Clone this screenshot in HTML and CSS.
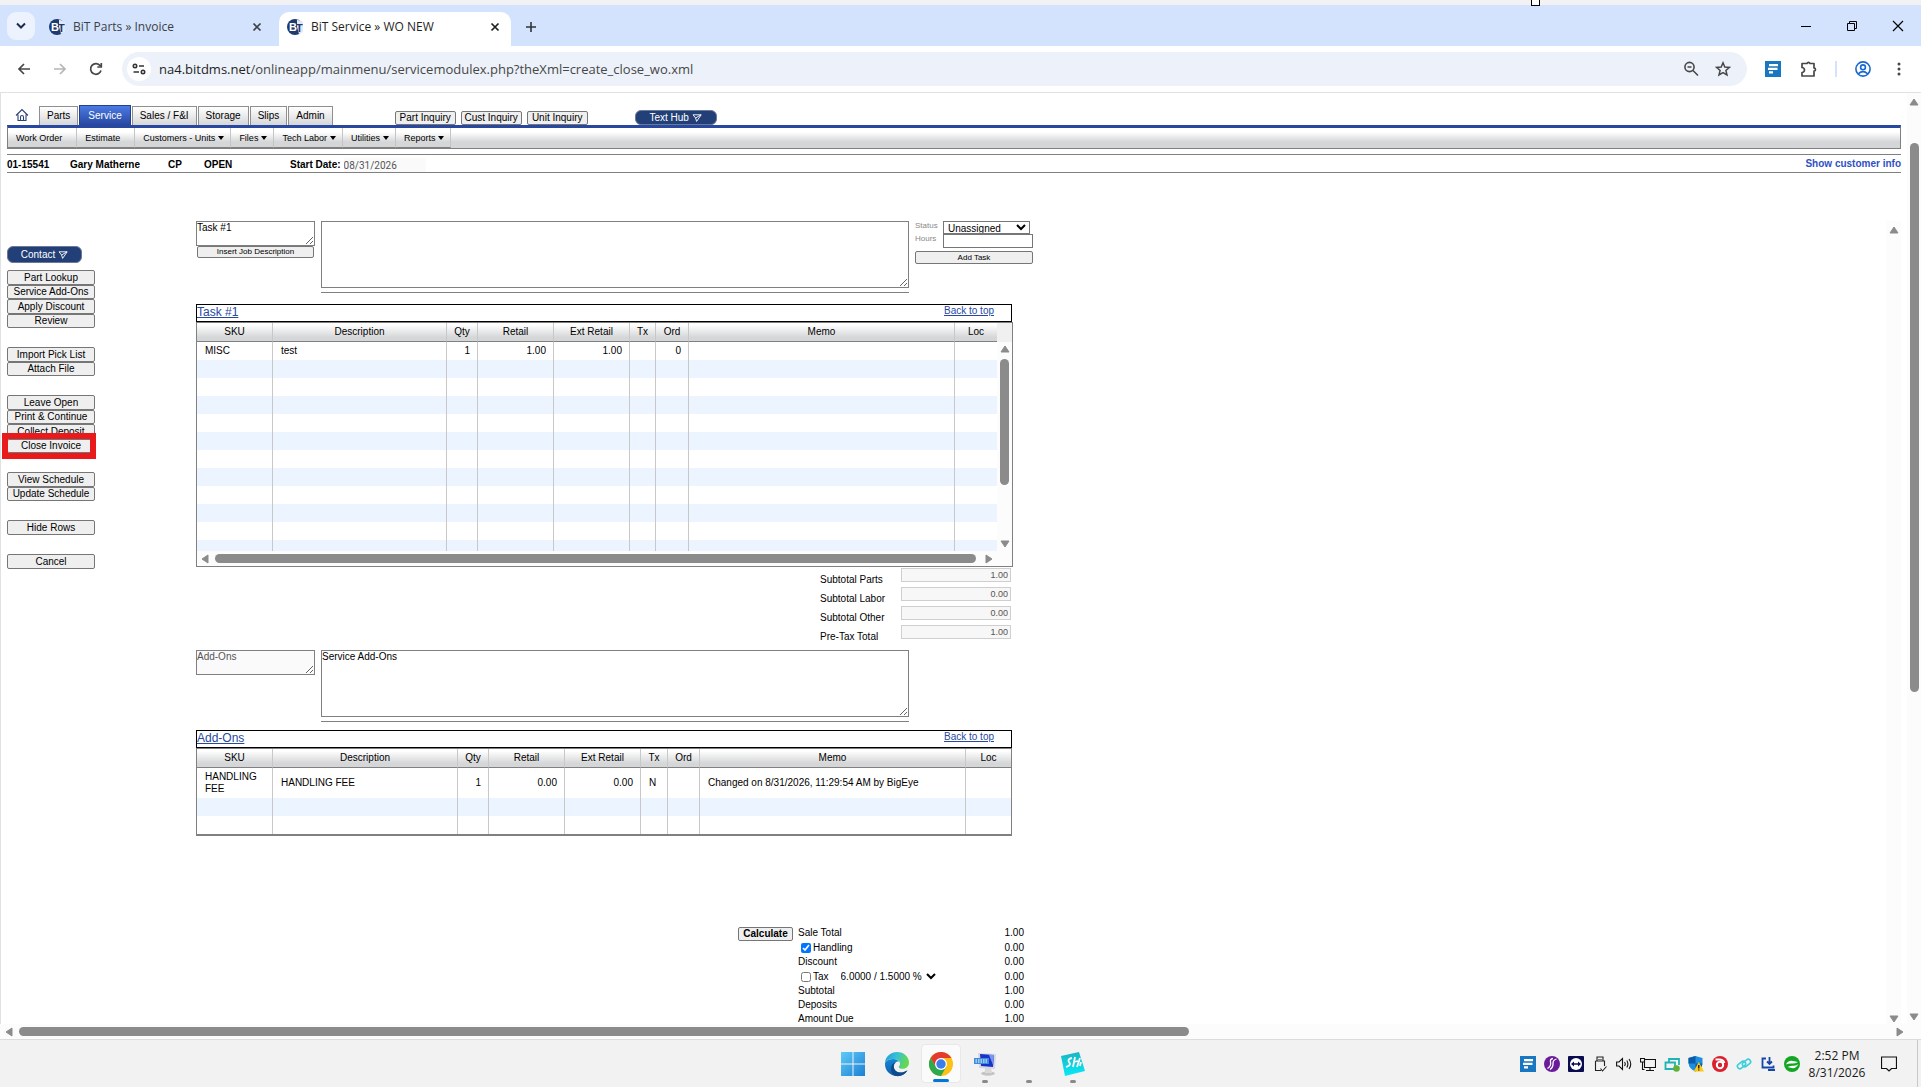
FILE: index.html
```html
<!DOCTYPE html>
<html lang="en">
<head>
<meta charset="utf-8">
<title>BiT Service » WO NEW</title>
<link rel="stylesheet" href="styles.css">
</head>
<body>
<svg class="defs" aria-hidden="true">
  <symbol id="bit-logo" viewBox="0 0 16 16">
    <circle cx="8" cy="8" r="8" fill="#1f3a6e"/>
    <path d="M10 0.6 L16 3 V13 L12 15 L10 8 Z" fill="#dfe9fb"/>
    <text x="2" y="12" font-size="11" font-weight="bold" font-family="Liberation Sans, sans-serif" fill="#fff">B</text>
    <text x="9" y="13" font-size="11" font-weight="bold" font-family="Liberation Sans, sans-serif" fill="#1f3a6e">T</text>
  </symbol>
  <symbol id="close" viewBox="0 0 10 10"><path d="M1.5 1.5 L8.500 8.500 M8.500 1.500 L1.500 8.500" stroke="currentColor" stroke-width="1.700" fill="none"/></symbol>
  <symbol id="arrow-up" viewBox="0 0 10 8"><path d="M5 1 L9 7 H1 Z" fill="#8b8b8b" stroke="#8b8b8b" stroke-linejoin="round"/></symbol>
  <symbol id="arrow-down" viewBox="0 0 10 8"><path d="M5 7 L9 1 H1 Z" fill="#8b8b8b" stroke="#8b8b8b" stroke-linejoin="round"/></symbol>
  <symbol id="arrow-left" viewBox="0 0 8 10"><path d="M1 5 L7 1 V9 Z" fill="#8b8b8b" stroke="#8b8b8b" stroke-linejoin="round"/></symbol>
  <symbol id="arrow-right" viewBox="0 0 8 10"><path d="M7 5 L1 1 V9 Z" fill="#8b8b8b" stroke="#8b8b8b" stroke-linejoin="round"/></symbol>
  <symbol id="send" viewBox="0 0 10 8"><path d="M1 .8 L9.200 .8 L4.600 7.400 L3.600 4 Z M3.600 4 L9 .8" fill="none" stroke="#fff" stroke-width=".9" stroke-linejoin="round"/></symbol>
  <symbol id="caret" viewBox="0 0 6 4"><path d="M0 0 H6 L3 4 Z" fill="#000"/></symbol>
  <symbol id="note" viewBox="0 0 16 16"><rect width="16" height="16" fill="#1976c0"/><path d="M4 4.200 H13 M3 7.800 H12.500 M4 11.300 H8" stroke="#fff" stroke-width="2.200"/></symbol>
</svg>

<div class="desktop">
  <div class="screen-top"><span class="handle"></span></div>

  <div class="tab-strip">
    <button class="tab-search" aria-label="Search tabs"><svg width="12" height="8" viewBox="0 0 12 8"><path d="M2 1.500 L6 5.500 L10 1.500" fill="none" stroke="#1b2c4f" stroke-width="2"/></svg></button>
    <div class="tab">
      <svg class="i16"><use href="#bit-logo"/></svg><span class="tab-title">BiT Parts » Invoice</span>
      <button class="tab-close" aria-label="Close tab"><svg class="i10"><use href="#close"/></svg></button>
    </div>
    <div class="tab active">
      <svg class="i16"><use href="#bit-logo"/></svg><span class="tab-title">BiT Service » WO NEW</span>
      <button class="tab-close" aria-label="Close tab"><svg class="i10"><use href="#close"/></svg></button>
    </div>
    <button class="new-tab" aria-label="New tab"><svg width="12" height="12" viewBox="0 0 12 12"><path d="M6 1 V11 M1 6 H11" stroke="#333" stroke-width="1.600"/></svg></button>
    <div class="window-controls">
      <button aria-label="Minimize"><svg width="12" height="12" viewBox="0 0 12 12"><path d="M1 6.500 H11" stroke="#000"/></svg></button>
      <button aria-label="Restore"><svg width="12" height="12" viewBox="0 0 12 12"><path d="M1.500 3.500 H8.500 V10.500 H1.500 Z M3.500 3.500 V1.500 H10.500 V8.500 H8.500" fill="none" stroke="#000"/></svg></button>
      <button aria-label="Close"><svg width="12" height="12" viewBox="0 0 12 12"><path d="M1 1 L11 11 M11 1 L1 11" stroke="#000" stroke-width="1.200"/></svg></button>
    </div>
  </div>

  <div class="toolbar">
    <button class="tool" aria-label="Back"><svg width="14" height="12" viewBox="0 0 14 12"><path d="M13 6 H2 M7 1 L2 6 L7 11" fill="none" stroke="#474747" stroke-width="1.700"/></svg></button>
    <button class="tool" aria-label="Forward"><svg width="14" height="12" viewBox="0 0 14 12"><path d="M1 6 H12 M7 1 L12 6 L7 11" fill="none" stroke="#b5b5b5" stroke-width="1.700"/></svg></button>
    <button class="tool" aria-label="Reload"><svg width="14" height="14" viewBox="0 0 14 14"><path d="M12 8.500 A5.300 5.300 0 1 1 11.200 3.800 M12.300 1 V5 H8.300" fill="none" stroke="#474747" stroke-width="1.700"/></svg></button>
    <div class="address">
      <span class="site-info"><svg width="14" height="12" viewBox="0 0 14 12"><g fill="none" stroke="#333" stroke-width="1.600"><circle cx="3" cy="3" r="1.700"/><path d="M7 3 H12 M1.500 9 H7"/><circle cx="11" cy="9" r="1.700"/></g></svg></span>
      <span class="url"><span class="host">na4.bitdms.net</span>/onlineapp/mainmenu/servicemodulex.php?theXml=create_close_wo.xml</span>
      <button class="addr-btn" aria-label="Zoom"><svg width="16" height="16" viewBox="0 0 16 16"><g fill="none" stroke="#474747" stroke-width="1.600"><circle cx="6.500" cy="6" r="4.600"/><path d="M10 9.500 L15 14.500 M4.500 6 H8.500"/></g></svg></button>
      <button class="addr-btn" aria-label="Bookmark"><svg width="16" height="16" viewBox="0 0 16 16"><path d="M8 1.800 L9.800 6 L14.400 6.400 L10.900 9.400 L12 13.900 L8 11.500 L4 13.900 L5.100 9.400 L1.600 6.400 L6.200 6 Z" fill="none" stroke="#474747" stroke-width="1.500"/></svg></button>
    </div>
    <div class="extensions">
      <button aria-label="Notes"><svg class="i16"><use href="#note"/></svg></button>
      <button aria-label="Extensions"><svg width="18" height="18" viewBox="0 0 18 18"><path d="M2 3.500 H7 A1.600 1.600 0 0 1 10 3.500 H14 V8 A1.500 1.500 0 0 1 14 11 V16 H2 V12.500 A2.200 2.200 0 0 0 2 7.500 Z" fill="none" stroke="#474747" stroke-width="1.700" stroke-linejoin="round"/></svg></button>
      <span class="divider"></span>
      <button aria-label="Profile"><svg width="16" height="16" viewBox="0 0 16 16"><g fill="none" stroke="#1967d2" stroke-width="1.600"><circle cx="8" cy="8" r="7.100"/><circle cx="8" cy="6.300" r="2.400"/><path d="M3.300 12.800 Q8 8.600 12.700 12.800"/></g></svg></button>
      <button aria-label="Menu"><svg width="4" height="14" viewBox="0 0 4 14"><g fill="#474747"><circle cx="2" cy="2" r="1.500"/><circle cx="2" cy="7" r="1.500"/><circle cx="2" cy="12" r="1.500"/></g></svg></button>
    </div>
  </div>

  <div class="viewport">
    <div class="app">
      <header class="app-header">
        <div class="modules">
          <a class="home" href="#" aria-label="Home"><svg width="14" height="14" viewBox="0 0 14 14"><path d="M1 7.500 L7 1.500 L13 7.500 M3 6.500 V12.500 H11 V6.500 M5.500 12.500 V9 A1.500 1.500 0 0 1 8.500 9 V12.500" fill="none" stroke="#2c4272" stroke-width="1.100"/></svg></a>
          <nav class="module-tabs">
            <a href="#">Parts</a><a href="#" class="current">Service</a><a href="#">Sales / F&amp;I</a><a href="#">Storage</a><a href="#">Slips</a><a href="#">Admin</a>
          </nav>
          <div class="inquiries">
            <button class="btn">Part Inquiry</button><button class="btn">Cust Inquiry</button><button class="btn">Unit Inquiry</button>
          </div>
          <button class="pill hub">Text Hub <svg width="10" height="8"><use href="#send"/></svg></button>
        </div>
        <nav class="menu">
          <a href="#">Work Order</a>
          <a href="#">Estimate</a>
          <a href="#">Customers - Units <svg width="6" height="4"><use href="#caret"/></svg></a>
          <a href="#">Files <svg width="6" height="4"><use href="#caret"/></svg></a>
          <a href="#">Tech Labor <svg width="6" height="4"><use href="#caret"/></svg></a>
          <a href="#">Utilities <svg width="6" height="4"><use href="#caret"/></svg></a>
          <a href="#">Reports <svg width="6" height="4"><use href="#caret"/></svg></a>
        </nav>
        <div class="order-info">
          <span>01-15541</span><span>Gary Matherne</span><span>CP</span><span>OPEN</span>
          <label for="start-date">Start Date:</label>
          <input id="start-date" type="text" value="08/31/2026" readonly>
          <a href="#">Show customer info</a>
        </div>
      </header>

      <div class="workspace">
        <aside class="sidebar">
          <button class="pill contact">Contact <svg width="10" height="8"><use href="#send"/></svg></button>
          <div class="group"><button class="btn">Part Lookup</button><button class="btn">Service Add-Ons</button><button class="btn">Apply Discount</button><button class="btn">Review</button></div>
          <div class="group"><button class="btn">Import Pick List</button><button class="btn">Attach File</button></div>
          <div class="group"><button class="btn">Leave Open</button><button class="btn">Print &amp; Continue</button><button class="btn">Collect Deposit</button><div class="marked"><button class="btn">Close Invoice</button><span class="ring"></span></div></div>
          <div class="group"><button class="btn">View Schedule</button><button class="btn">Update Schedule</button></div>
          <div class="group"><button class="btn">Hide Rows</button></div>
          <div class="group"><button class="btn">Cancel</button></div>
        </aside>

        <main class="main">
          <section class="task-row with-status">
            <div class="task-name">
              <textarea class="name-box" aria-label="Task name">Task #1</textarea>
              <button class="btn small">Insert Job Description</button>
            </div>
            <div class="task-notes"><textarea class="notes-box" aria-label="Task description"></textarea></div>
            <div class="task-status">
              <label for="status">Status</label>
              <select id="status"><option>Unassigned</option></select>
              <label for="hours">Hours</label>
              <input id="hours" type="text">
              <button class="btn small">Add Task</button>
            </div>
          </section>

          <section class="parts">
            <div class="parts-title"><a class="name" href="#">Task #1</a><a class="top" href="#">Back to top</a></div>
            <div class="grid-box scrolling">
              <div class="grid-clip">
                <table class="grid tall">
                  <colgroup><col class="w76"><col class="w174"><col class="w31"><col class="w76"><col class="w76"><col class="w26"><col class="w33"><col class="w266"><col class="w45"></colgroup>
                  <thead><tr><th>SKU</th><th>Description</th><th>Qty</th><th>Retail</th><th>Ext Retail</th><th>Tx</th><th>Ord</th><th>Memo</th><th>Loc</th></tr></thead>
                  <tbody>
                    <tr><td>MISC</td><td>test</td><td class="num">1</td><td class="num">1.00</td><td class="num">1.00</td><td></td><td class="num">0</td><td></td><td></td></tr>
                    <tr><td></td><td></td><td></td><td></td><td></td><td></td><td></td><td></td><td></td></tr>
                    <tr><td></td><td></td><td></td><td></td><td></td><td></td><td></td><td></td><td></td></tr>
                    <tr><td></td><td></td><td></td><td></td><td></td><td></td><td></td><td></td><td></td></tr>
                    <tr><td></td><td></td><td></td><td></td><td></td><td></td><td></td><td></td><td></td></tr>
                    <tr><td></td><td></td><td></td><td></td><td></td><td></td><td></td><td></td><td></td></tr>
                    <tr><td></td><td></td><td></td><td></td><td></td><td></td><td></td><td></td><td></td></tr>
                    <tr><td></td><td></td><td></td><td></td><td></td><td></td><td></td><td></td><td></td></tr>
                    <tr><td></td><td></td><td></td><td></td><td></td><td></td><td></td><td></td><td></td></tr>
                    <tr><td></td><td></td><td></td><td></td><td></td><td></td><td></td><td></td><td></td></tr>
                    <tr><td></td><td></td><td></td><td></td><td></td><td></td><td></td><td></td><td></td></tr>
                    <tr><td></td><td></td><td></td><td></td><td></td><td></td><td></td><td></td><td></td></tr>
                  </tbody>
                </table>
              </div>
              <div class="vbar grid-vbar"><svg class="ud"><use href="#arrow-up"/></svg><span class="thumb"></span><svg class="ud last"><use href="#arrow-down"/></svg></div>
              <div class="hbar grid-hbar"><svg class="lr"><use href="#arrow-left"/></svg><span class="thumb"></span><svg class="lr last"><use href="#arrow-right"/></svg></div>
            </div>
          </section>

          <div class="subtotals">
            <label for="st-parts">Subtotal Parts</label><input id="st-parts" type="text" value="1.00" readonly>
            <label for="st-labor">Subtotal Labor</label><input id="st-labor" type="text" value="0.00" readonly>
            <label for="st-other">Subtotal Other</label><input id="st-other" type="text" value="0.00" readonly>
            <label for="st-pretax">Pre-Tax Total</label><input id="st-pretax" type="text" value="1.00" readonly>
          </div>

          <section class="task-row">
            <div class="task-name"><textarea class="name-box muted" aria-label="Add-ons name" readonly>Add-Ons</textarea></div>
            <div class="task-notes"><textarea class="notes-box" aria-label="Add-ons description">Service Add-Ons</textarea></div>
          </section>

          <section class="parts">
            <div class="parts-title"><a class="name" href="#">Add-Ons</a><a class="top" href="#">Back to top</a></div>
            <div class="grid-box short">
              <table class="grid">
                <colgroup><col class="w76"><col class="w185"><col class="w31"><col class="w76"><col class="w76"><col class="w27"><col class="w32"><col class="w266"><col class="w45"></colgroup>
                <thead><tr><th>SKU</th><th>Description</th><th>Qty</th><th>Retail</th><th>Ext Retail</th><th>Tx</th><th>Ord</th><th>Memo</th><th>Loc</th></tr></thead>
                <tbody>
                  <tr><td>HANDLING FEE</td><td>HANDLING FEE</td><td class="num">1</td><td class="num">0.00</td><td class="num">0.00</td><td>N</td><td></td><td>Changed on 8/31/2026, 11:29:54 AM by BigEye</td><td></td></tr>
                  <tr><td></td><td></td><td></td><td></td><td></td><td></td><td></td><td></td><td></td></tr>
                  <tr><td></td><td></td><td></td><td></td><td></td><td></td><td></td><td></td><td></td></tr>
                </tbody>
              </table>
            </div>
          </section>

          <section class="totals">
            <button class="btn calc">Calculate</button>
            <div class="totals-list">
              <div class="line"><span>Sale Total</span><span>1.00</span></div>
              <div class="line check"><label><input type="checkbox" checked>Handling</label><span>0.00</span></div>
              <div class="line"><span>Discount</span><span>0.00</span></div>
              <div class="line check"><label><input type="checkbox">Tax</label><select aria-label="Tax rate"><option>6.0000 / 1.5000 %</option></select><span>0.00</span></div>
              <div class="line"><span>Subtotal</span><span>1.00</span></div>
              <div class="line"><span>Deposits</span><span>0.00</span></div>
              <div class="line"><span>Amount Due</span><span>1.00</span></div>
            </div>
          </section>
        </main>

        <div class="vbar inner-vbar"><svg class="ud"><use href="#arrow-up"/></svg><svg class="ud last"><use href="#arrow-down"/></svg></div>
      </div>
    </div>
    <div class="vbar page-vbar"><svg class="ud"><use href="#arrow-up"/></svg><span class="thumb"></span><svg class="ud last"><use href="#arrow-down"/></svg></div>
    <div class="hbar page-hbar"><svg class="lr"><use href="#arrow-left"/></svg><span class="thumb"></span><svg class="lr last"><use href="#arrow-right"/></svg></div>
  </div>

  <footer class="taskbar">
    <div class="dock">
      <button class="dock-item" aria-label="Start"><svg width="24" height="24" viewBox="0 0 24 24"><defs><linearGradient id="win" x1="0" y1="0" x2="1" y2="1"><stop offset="0" stop-color="#60cbf8"/><stop offset="1" stop-color="#1b7fd4"/></linearGradient></defs><path d="M0 0 H11.500 V11.500 H0 Z M12.500 0 H24 V11.500 H12.500 Z M0 12.500 H11.500 V24 H0 Z M12.500 12.500 H24 V24 H12.500 Z" fill="url(#win)"/></svg></button>
      <button class="dock-item" aria-label="Edge"><svg width="26" height="26" viewBox="0 0 26 26"><defs><linearGradient id="edge-a" x1="0" y1="0" x2="1" y2=".3"><stop offset="0" stop-color="#2196d8"/><stop offset=".5" stop-color="#35c1d8"/><stop offset="1" stop-color="#66d84e"/></linearGradient><linearGradient id="edge-b" x1="0" y1="0" x2="0" y2="1"><stop offset="0" stop-color="#1786d3"/><stop offset="1" stop-color="#0e5fae"/></linearGradient></defs><path d="M1 12 C1.500 5 7 1 13 1 C20 1 25 6 25 11.500 C25 15.500 22 17.800 18.500 17.800 C16 17.800 14.800 17 14.800 16 C14.800 15 16 14.800 16 12.800 C16 10 13 8 9.500 8 C5 8 2 10 1 12 Z" fill="url(#edge-a)"/><path d="M1 12 C2.500 9 6 8 9.500 8 C12 8 14 9 15 10.500 C11.500 10 9.500 12.500 9.700 15.500 C10 20 14 22 17.500 21.500 C20 21.200 22 20 23.500 19.200 C21.500 23 17.500 25 13 25 C6 25 .5 19.500 1 12 Z" fill="url(#edge-b)"/><path d="M12.300 11.300 C9 13 9 18 12.500 20.500 C15.500 22.500 20 21.500 23.500 19.200 C21 24 15.500 26 11 24.800 C7 23 6.500 18 7.500 15 C8.500 12.500 10.500 11.300 12.300 11.300 Z" fill="#114a8b"/></svg></button>
      <button class="dock-item open" aria-label="Chrome"><svg width="24" height="24" viewBox="0 0 24 24"><circle cx="12" cy="12" r="12" fill="#fbc116"/><path d="M1.600 6 A12 12 0 0 1 22.400 6 H12 L6.800 15 Z" fill="#e33b2e"/><path d="M1.600 6 A12 12 0 0 0 12 24 L17.200 15 L12 17 L6.800 15 Z" fill="#2da94f"/><circle cx="12" cy="12" r="6" fill="#fff"/><circle cx="12" cy="12" r="4.700" fill="#3b7ded"/></svg></button>
      <button class="dock-item running" aria-label="Remote keyboard"><svg width="24" height="24" viewBox="0 0 24 24"><ellipse cx="15" cy="21.500" rx="7" ry="2.200" fill="#c4c4c4"/><path d="M12 16 H18 L19 21 H12 Z" fill="#d9d9d9"/><path d="M5 1 L23 2 L22 17 L6 16 Z" fill="#d5d9e4"/><path d="M7 2 L21 3 L20 15 L8 14 Z" fill="#1733c9"/><path d="M16 3 L21 3 L20 13 Z" fill="#7d94ef"/><rect x="1" y="6" width="15" height="6" fill="#3e8ddb"/><path d="M2.500 8 H15 M2.500 10 H15" stroke="#fff" stroke-dasharray="1.500 1"/></svg></button>
      <button class="dock-item running" aria-label="Background app"></button>
      <button class="dock-item running" aria-label="Share"><svg width="26" height="26" viewBox="0 0 26 26"><defs><linearGradient id="cy" x1="0" y1="0" x2="0" y2="1"><stop offset="0" stop-color="#19b5c2"/><stop offset="1" stop-color="#08eaf8"/></linearGradient></defs><path d="M1 5 L19 1 L25 20 L5 25 Z" fill="url(#cy)"/><path d="M12 7 Q7 8 9 11 Q12 14 6 16 M15 6 L13 16 M14 11 L18 10 M20 7 L17 16 M21 11 L20 15" fill="none" stroke="#fff" stroke-width="1.800"/></svg></button>
    </div>
    <div class="tray">
      <svg class="i16"><use href="#note"/></svg>
      <svg class="i16" viewBox="0 0 16 16"><circle cx="8" cy="8" r="8" fill="#6a1b9a"/><path d="M9 2.500 Q6 3 6.500 6 Q7.500 10 3.500 12.500 M12.500 3 Q9 4 9 7 Q9.500 11 6 13.500" stroke="#fff" stroke-width="1.300" fill="none"/></svg>
      <svg class="i16" viewBox="0 0 16 16"><rect width="16" height="16" rx="1" fill="#0b0b50"/><circle cx="8" cy="8" r="6" fill="#fff"/><path d="M3 8 L6 5.500 V7.200 H10 V5.500 L13 8 L10 10.500 V8.800 H6 V10.500 Z" fill="#0b0b50"/></svg>
      <svg class="i16" viewBox="0 0 16 16"><path d="M5 5 V1 H11 V5 M3.500 5 H12.500 V10 M3.500 5 V14.500 H9 M7 3 V4 M9 3 V4 M8.500 12.500 L10.500 15 L14.500 10.500" fill="none" stroke="#222" stroke-width="1.100"/></svg>
      <svg class="i16" viewBox="0 0 16 16"><path d="M.6 6 H3 L6.500 2.500 V13.500 L3 10 H.6 Z M8.500 6 Q10 8 8.500 10 M10.800 4.500 Q13 8 10.800 11.500 M13 3 Q16.500 8 13 13" fill="none" stroke="#111" stroke-width="1.100"/></svg>
      <svg class="i16" viewBox="0 0 16 16"><path d="M5 3.500 H15.500 V11.500 H4.500 V6 M10 11.500 V14.500 M6 14.500 H14 M.5 2.500 H4.500 V6 H.5 Z M2.500 6 V13.500 H4.500" fill="none" stroke="#111" stroke-width="1.100"/></svg>
      <svg class="i16" viewBox="0 0 16 16"><path d="M5 6 V3 H15 V9 M1.500 6.500 H11 V13 H1.500 Z" fill="none" stroke="#1fb3b8" stroke-width="1.800"/><circle cx="12.500" cy="12.500" r="3.300" fill="#62b136"/></svg>
      <svg class="i16" viewBox="0 0 16 16"><path d="M7.500 0 L14.500 2 V7 Q14 13 7.500 15.500 Q1 13 .5 7 V2 Z" fill="#1d8fe0"/><path d="M7.500 0 V7.500 H.5 V2 Z M7.500 7.500 H14.500 Q14 13 7.500 15.500 Z" fill="#0a5ba8"/><path d="M10.800 6 L16 15.500 H5.600 Z" fill="#fdc816"/><path d="M10.800 9 V12.500 M10.800 13.500 V14.600" stroke="#000" stroke-width="1.200"/></svg>
      <svg class="i16" viewBox="0 0 16 16"><circle cx="8" cy="8" r="8" fill="#dc1f2b"/><circle cx="8" cy="9" r="3.200" fill="none" stroke="#fff" stroke-width="2"/><path d="M3.500 3.500 H8 Q11.500 4 12.500 7" stroke="#fff" stroke-width="1.800" fill="none"/></svg>
      <svg class="i16" viewBox="0 0 16 16"><g fill="none" stroke="#38cfdb" stroke-width="1.600"><rect x="1" y="6.500" width="9" height="5" rx="2.500" transform="rotate(-38 5.500 9)"/><rect x="6" y="4.500" width="9" height="5" rx="2.500" transform="rotate(-38 10.500 7)"/></g></svg>
      <svg class="i16" viewBox="0 0 16 16"><path d="M6 2.500 H2.500 V11.500 H13.500 V9.500 M9.500 1 V8 M7 5.500 L9.500 8 L12 5.500 M8 14 H15" fill="none" stroke="#1547a8" stroke-width="1.800"/></svg>
      <svg class="i16" viewBox="0 0 16 16"><circle cx="8" cy="8" r="8" fill="#12a623"/><path d="M2 8.500 Q4 4 9 5 L14 6 Q11 8 7 7.500 Q4 7.500 2 8.500 Z M14.500 8 Q12 13 7.500 12 L3.500 11 Q7 9.500 10 9.800 Q13 9.500 14.500 8 Z" fill="#fff"/></svg>
      <div class="clock"><span>2:52 PM</span><span>8/31/2026</span></div>
      <svg class="i16" viewBox="0 0 16 16"><path d="M.5 1 H15.500 V12.500 H10.500 L8 15 L5.500 12.500 H.5 Z" fill="none" stroke="#111" stroke-width="1.200"/></svg>
    </div>
  </footer>
</div>
</body>
</html>
```
FILE: styles.css
```css
* { box-sizing: border-box; }

body {
  margin: 0;
  background: #fff;
  color: #000;
  font: 10px/12px "Liberation Sans", Arial, sans-serif;
}

button, input, select, textarea { font: inherit; color: inherit; margin: 0; }
button { border: 0; padding: 0; background: none; display: flex; align-items: center; justify-content: center; }
a { color: #000; text-decoration: none; }
svg { display: block; flex: none; }

.defs { display: none; }
.i16 { width: 16px; height: 16px; }
.i10 { width: 10px; height: 10px; }

.desktop { display: flex; flex-direction: column; height: 100vh; overflow: hidden; }

/* Browser frame */
.screen-top { height: 5px; background: #f2f2f5; position: relative; }
.handle { position: absolute; left: 79.700%; top: -4px; width: 9px; height: 10px; border: 1px solid #000; background: #fff; z-index: 1; }

.tab-strip {
  display: flex; align-items: flex-end; height: 41px; padding: 7px 0 0 7px;
  background: #d3e3fd; font: 12px/16px "Open Sans", "Noto Sans", sans-serif;
}
.tab-search { width: 28px; height: 28px; margin: 0 8px 6px 0; border-radius: 9px; background: #ecf3fe; }
.tab { display: flex; align-items: center; width: 236px; height: 34px; padding: 0 16px 4px 6px; gap: 8px; color: #3c4043; }
.tab.active { width: 232px; padding: 0 10px 4px 8px; background: #fff; border-radius: 10px 10px 0 0; color: #1f1f1f; }
.tab-title { flex: 1; white-space: nowrap; overflow: hidden; }
.tab-close { width: 12px; height: 16px; }
.new-tab { width: 40px; height: 34px; padding-bottom: 4px; }
.window-controls { display: flex; margin-left: auto; }
.window-controls button { width: 46px; height: 34px; padding-bottom: 6px; }

.toolbar { display: flex; align-items: center; height: 47px; padding: 0 4px 1px 6px; border-bottom: 1px solid #dfe1e5; border-radius: 10px 10px 0 0; background: #fff; }
.tool { width: 36px; height: 34px; }
.address { display: flex; align-items: center; flex: 1; height: 34px; margin-left: 8px; padding: 0 8px 0 5px; border-radius: 17px; background: #edf2fa; }
.site-info { display: flex; align-items: center; justify-content: center; width: 24px; height: 24px; border-radius: 12px; background: #fff; margin-right: 8px; }
.url { flex: 1; font: 13px/20px "Open Sans", "Noto Sans", sans-serif; color: #474747; white-space: nowrap; }
.host { color: #1f1f1f; }
.addr-btn { width: 32px; height: 24px; }
.extensions { display: flex; align-items: center; padding-left: 8px; }
.extensions button { width: 36px; height: 24px; }
.divider { width: 2px; height: 16px; margin: 0 8px; background: #d3e3fd; }

/* Page viewport and scroll bars */
.viewport { flex: 1; min-height: 0; display: grid; grid-template-columns: 1fr 14px; grid-template-rows: minmax(0, 1fr) 15px; }
.app { display: flex; flex-direction: column; padding: 12px 6px 0 6px; border-left: 1px solid #e1e1e8; overflow: hidden; }

.vbar { display: flex; flex-direction: column; align-items: center; background: #fcfcfc; }
.hbar { display: flex; align-items: center; background: #fcfcfc; }
.ud { width: 10px; height: 8px; }
.lr { width: 8px; height: 10px; }
.vbar .last { margin-top: auto; }
.hbar .last { margin-left: auto; }
.thumb { background: #8b8b8b; border-radius: 5px; }
.vbar .thumb { width: 9px; }
.hbar .thumb { height: 9px; }
.page-vbar { padding: 5px 0 3px; }
.page-vbar .thumb { height: 59.500%; margin-top: 37px; }
.page-hbar { grid-column: 1 / -1; padding: 0 17px 0 5px; }
.page-hbar .thumb { width: 61.600%; margin-left: 6px; }

/* Buttons */
.btn {
  border: 1px solid #767676; border-radius: 2px; background: #efefef; color: #000;
  font-size: 10px; line-height: 12px; white-space: nowrap;
}
.btn.small { height: 12px; font-size: 8px; line-height: 10px; width: 100%; }
.pill { border: 1px solid #6b7896; border-radius: 6px; background: #223f77; color: #fff; gap: 3px; }

/* App header */
.modules { display: flex; align-items: flex-end; height: 20px; }
.home { width: 26px; padding: 0 0 3px 8px; margin-right: 6px; }
.module-tabs { display: flex; align-items: flex-end; gap: 1px; }
.module-tabs a {
  height: 19px; padding: 0 7px; line-height: 18px; border: 1px solid #8f8f8f; border-bottom: 0;
  background: linear-gradient(#fff, #d5d6d8);
}
.module-tabs .current { height: 20px; padding: 0 8px; color: #fff; border-color: #22408c; background: linear-gradient(#4a7be4, #28479f); line-height: 20px; }
.inquiries { display: flex; gap: 5px; margin-left: 62px; }
.inquiries .btn { height: 14px; width: 61px; }
.hub { width: 82px; height: 15px; margin-left: 47px; }

.menu { display: flex; height: 24px; border: 1px solid #808080; border-top: 3px solid #28479f; background: linear-gradient(#fff 20%, #d5d6d8 70%); font-size: 9px; }
.menu a { display: flex; align-items: center; gap: 3px; padding: 0 6px 0 8px; border-right: 1px solid #c4c4c4; border-bottom: 1px solid #808080; white-space: nowrap; }
.menu a:nth-child(-n+2) { padding-right: 14px; }

.order-info { display: flex; align-items: center; height: 19px; margin-top: 5px; padding-top: 3px; border: solid #808080; border-width: 1px 0; font-weight: bold; }
.order-info span:nth-child(1) { width: 63px; }
.order-info span:nth-child(2) { width: 98px; }
.order-info span:nth-child(3) { width: 36px; }
.order-info span:nth-child(4) { width: 86px; }
.order-info input { width: 82px; height: 14px; margin-left: 3px; padding: 0; border: 0; background: #fafafa; color: #555; font: 10px/12px Roboto, sans-serif; }
.order-info a { margin-left: auto; padding-bottom: 2px; color: #2f4fc4; }

/* Workspace */
.workspace { flex: 1; min-height: 0; display: grid; grid-template-columns: 189px 1fr 15px; grid-template-rows: minmax(0, 1fr); }
.inner-vbar { margin-top: 48px; padding: 5px 0 1px; }

.sidebar { width: 88px; padding-top: 73px; }
.contact { width: 75px; height: 17px; margin-bottom: 7px; }
.group { display: grid; grid-auto-rows: 15px 14px; margin-bottom: 19px; }
.marked { position: relative; display: grid; }
.ring { position: absolute; inset: -6px -1px -6px -5px; border: 6px solid #e81a1c; }

.main { padding-top: 48px; min-width: 0; }
.task-row { display: flex; align-items: flex-start; gap: 6px; height: 80px; }
.task-row.with-status { height: 83px; }
.task-name { width: 119px; }
.task-name .btn { width: 117px; margin: 0 1px; }
textarea { display: block; width: 100%; padding: 0; border: 1px solid #808080; background: #fff; overflow: hidden; }
.name-box { height: 25px; }
.name-box.muted { background: #fafafa; color: #555; }
.task-notes { width: 588px; padding-bottom: 4px; border-bottom: 1px solid #808080; }
.notes-box { height: 67px; }
.task-status { display: grid; grid-template-columns: 28px 90px; grid-template-rows: 13px 14px 16px; align-content: start; align-items: start; color: #888; font-size: 8px; line-height: 9px; }
.task-status select { width: 87px; height: 13px; padding: 0; border: 1px solid #767676; border-radius: 0; background: #fff; color: #000; font-size: 10px; line-height: 11px; }
.task-status input { width: 90px; height: 14px; padding: 0 1px; border: 1px solid #767676; color: #000; }
.task-status .btn { grid-column: 1 / -1; align-self: end; height: 13px; }

.parts-title { display: flex; justify-content: space-between; width: 816px; height: 18px; padding: 0 17px 0 0; border: 1px solid #000; }
.parts-title a { color: #27489f; text-decoration: underline; }
.parts-title .name { font-size: 12px; line-height: 15px; }
.parts-title .top { line-height: 12px; }

.grid-box { width: 817px; border: 1px solid #808080; }
.grid-box.scrolling { display: grid; grid-template-columns: 800px 15px; grid-template-rows: 228px 15px; background: linear-gradient(#f0f0f0 19px, #fcfcfc 19px); }
.grid-box.short { width: 816px; border-bottom-width: 2px; }
.grid-clip { overflow: hidden; background: #fff; }
.grid-vbar { margin-top: 19px; padding: 3px 0; }
.grid-vbar .thumb { height: 126px; margin-top: 6px; }
.grid-hbar { padding: 0 4px; }
.grid-hbar .thumb { width: 761px; margin-left: 6px; }
.grid { table-layout: fixed; width: 100%; border-collapse: separate; border-spacing: 0; }
.grid th { height: 19px; padding: 0; font-weight: normal; border-right: 1px solid #c8c8c8; border-bottom: 1px solid #808080; background: linear-gradient(#fff 10%, #d5d6d8 80%); }
.grid td { height: 18px; padding: 3px 7px 3px 8px; border-right: 1px solid #c8c8c8; }
.grid tr > :last-child { border-right: 0; }
.grid .num { text-align: right; }
.grid tbody tr:nth-child(even) { background: #ebf4ff; }
.w26 { width: 26px; } .w27 { width: 27px; } .w31 { width: 31px; } .w32 { width: 32px; } .w33 { width: 33px; }
.w76 { width: 76px; } .w174 { width: 174px; } .w185 { width: 185px; } .w266 { width: 266px; }

.subtotals { display: grid; grid-template-columns: 81px 110px; grid-auto-rows: 14px; row-gap: 5px; margin: 1px 0 11px 624px; }
.subtotals label { padding-top: 6px; white-space: nowrap; }
.subtotals input { height: 14px; padding: 0 2px; border: 1px solid #cfcfcf; background: #f7f7f7; color: #555; font-size: 9px; text-align: right; }

.totals { display: flex; align-items: flex-start; gap: 5px; margin: 90px 0 0 542px; }
.calc { width: 55px; height: 14px; margin-top: 1px; font-weight: bold; }
.totals-list { width: 226px; }
.line { display: flex; justify-content: space-between; align-items: center; height: 14px; }
.line.check { height: 15px; }
.line label { display: flex; align-items: center; gap: 2px; padding-left: 3px; }
.line input { width: 10px; height: 10px; }
.line select { height: 13px; margin: 0 auto 0 8px; padding: 0; border: 0; background: none; }

/* Taskbar */
.taskbar { display: grid; grid-template-columns: 1fr auto 1fr; align-items: center; height: 48px; border-top: 1px solid #dcdcdc; background: #f2f2f2; }
.dock { grid-column: 2; display: flex; gap: 4px; padding-left: 4px; }
.dock-item { position: relative; width: 40px; height: 39px; border-radius: 4px; }
.dock-item.open { background: #fbfbfb; border: 1px solid #e8e8e8; }
.dock-item.running::after, .dock-item.open::after { content: ""; position: absolute; left: 50%; bottom: 0; width: 6px; height: 3px; margin-left: -3px; border-radius: 2px; background: #8a8a8a; }
.dock-item.open::after { width: 16px; margin-left: -8px; background: #0078d4; }
.tray { grid-column: 3; justify-self: end; display: flex; align-items: center; gap: 8px; margin-right: 3px; padding-right: 20px; height: 47px; border-right: 1px solid #c8c8c8; }
.clock { display: flex; flex-direction: column; align-items: center; width: 58px; margin-right: 7px; font: 12px/17px "Open Sans", "Noto Sans", sans-serif; color: #1a1a1a; }
```
